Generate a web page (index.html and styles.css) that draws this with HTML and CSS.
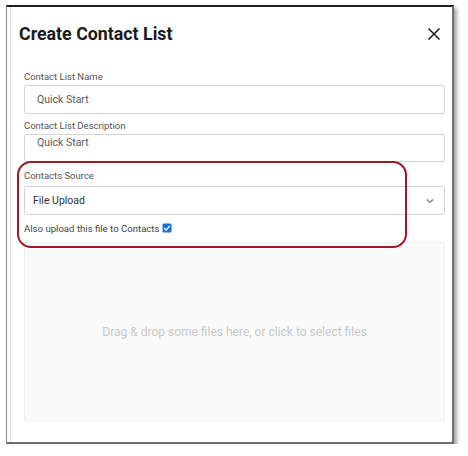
FILE: index.html
```html
<!DOCTYPE html>
<html>
<head>
<meta charset="utf-8">
<link rel="stylesheet" href="styles.css">
</head>
<body>
<div class="frame">
  <div class="dialog">
    <div class="header">
      <h1 class="title">Create Contact List</h1>
      <svg class="close" width="14" height="14" viewBox="0 0 14 14"><path d="M1.5 1.5 L12.5 12.5 M12.5 1.5 L1.5 12.5" stroke="#222" stroke-width="1.6" fill="none"/></svg>
    </div>
    <div class="body">
      <div class="label l1">Contact List Name</div>
      <div class="input">Quick Start</div>
      <div class="label l2">Contact List Description</div>
      <div class="input textarea">Quick Start</div>
      <div class="label l3">Contacts Source</div>
      <div class="select">
        <span>File Upload</span>
        <svg class="chev" width="8" height="6" viewBox="0 0 8 6"><path d="M1 1.5 L4 4.5 L7 1.5" stroke="#777" stroke-width="1.2" fill="none"/></svg>
      </div>
      <div class="check-row">
        <span>Also upload this file to Contacts</span>
        <svg class="cb" width="10" height="10" viewBox="0 0 10 10"><rect x="0.5" y="0.5" width="9" height="9" rx="1.5" fill="#1a6fd6"/><path d="M2.2 5.2 L4.2 7.1 L7.8 2.9" stroke="#fff" stroke-width="1.4" fill="none"/></svg>
      </div>
      <div class="dropzone">Drag &amp; drop some files here, or click to select files</div>
    </div>
    <div class="highlight"></div>
  </div>
</div>
</body>
</html>
```
FILE: styles.css
```css
html, body {
  margin: 0;
  padding: 0;
  background: #fff;
}
body {
  font-family: Roboto, "Liberation Sans", sans-serif;
}
.frame {
  box-sizing: border-box;
  margin: 5px 0 0 6px;
  width: 448px;
  height: 439px;
  border-top: 2px solid #1e1e1e;
  border-left: 1px solid #8a8a8a;
  border-right: 2px solid #6e6e6e;
  border-bottom: 2px solid #6e6e6e;
  box-shadow: 3px 3px 4px rgba(0, 0, 0, 0.35);
  padding-left: 3px;
  background: #fff;
}
.dialog {
  position: relative;
  height: 100%;
  border-left: 1px solid #dcdcdc;
}
.header {
  display: flex;
  justify-content: space-between;
  align-items: center;
  padding: 16px 11px 0 8px;
}
.title {
  margin: 0;
  font-size: 17.8px;
  line-height: 22px;
  font-weight: 700;
  color: #1a1a1a;
}
.body {
  padding: 0 7px 0 13px;
}
.label {
  font-size: 9.5px;
  line-height: 12px;
  color: #555;
}
.l1 { margin-top: 26px; margin-bottom: 2px; }
.l2 { margin-top: 6px; margin-bottom: 2px; }
.l3 { margin-top: 8px; margin-bottom: 4px; }
.input {
  box-sizing: border-box;
  height: 29px;
  border: 1px solid #d2d2d2;
  border-radius: 3px;
  padding-left: 12px;
  font-size: 10.5px;
  line-height: 27px;
  color: #5a5a5a;
}
.textarea {
  height: 28px;
  line-height: 14px;
  padding-top: 1px;
}
.select {
  box-sizing: border-box;
  height: 29px;
  border: 1px solid #d2d2d2;
  border-radius: 3px;
  padding: 0 10px 0 8px;
  display: flex;
  align-items: center;
  justify-content: space-between;
  font-size: 10.5px;
  color: #333;
}
.check-row {
  display: flex;
  align-items: center;
  gap: 3px;
  margin-top: 7px;
  height: 12px;
  font-size: 9.6px;
  color: #444;
}
.cb {
  display: block;
}
.dropzone {
  box-sizing: border-box;
  margin-top: 8px;
  height: 179px;
  background: #fafafa;
  border: 1px solid #f0f0f0;
  display: flex;
  align-items: center;
  justify-content: center;
  font-size: 12px;
  color: #c8c8c8;
}
.highlight {
  position: absolute;
  left: 6px;
  top: 154px;
  width: 390px;
  height: 87px;
  box-sizing: border-box;
  border: 2.5px solid #9d1b22;
  border-radius: 14px;
  pointer-events: none;
}
```
